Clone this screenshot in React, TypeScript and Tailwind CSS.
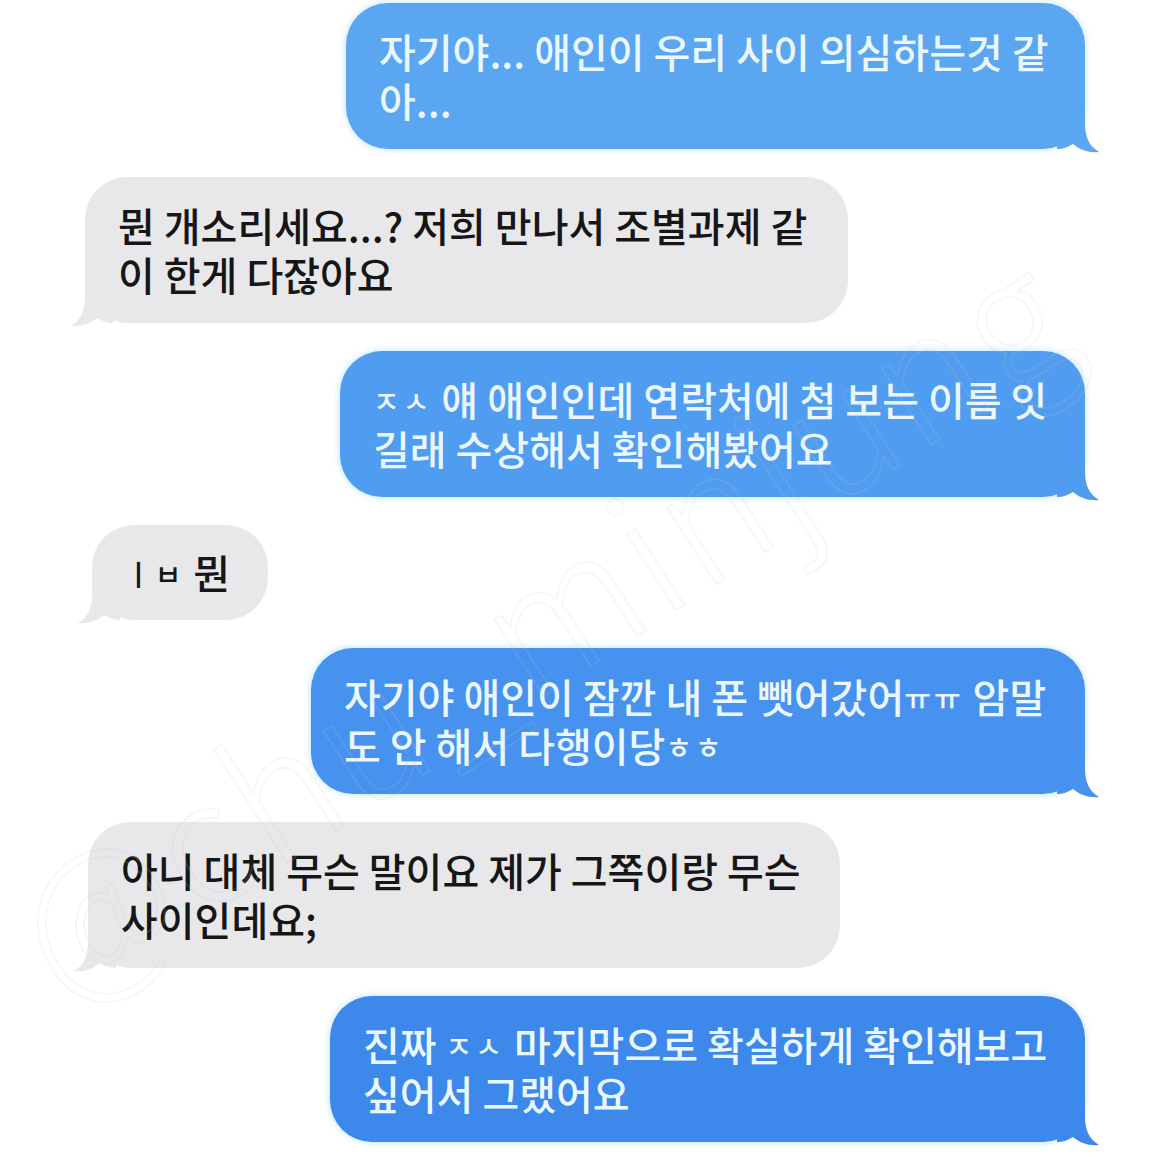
import React from "react";

type Side = "left" | "right";

function Tail({ side, color }: { side: Side; color: string }) {
  if (side === "right") {
    return (
      <svg
        className={`absolute -right-[14px] -bottom-[4px] w-[42px] h-[46px] ${color}`}
        viewBox="0 0 42 46"
        fill="currentColor"
      >
        <path d="M0 0 H28 V16 C28 30 32 39 42 45 C32 46 23 43 16 37 C11 40 6 42 0 42 Z" />
      </svg>
    );
  }
  return (
    <svg
      className={`absolute -left-[14px] -bottom-[4px] w-[42px] h-[46px] ${color}`}
      viewBox="0 0 42 46"
      fill="currentColor"
    >
      <path d="M42 0 H14 V16 C14 30 10 39 0 45 C10 46 19 43 26 37 C31 40 36 42 42 42 Z" />
    </svg>
  );
}

function Blue({
  w,
  bg,
  text,
  children,
}: {
  w: string;
  bg: string;
  text: string;
  children: React.ReactNode;
}) {
  return (
    <div className="flex justify-end pr-[85px]">
      <div
        className={`relative ${w} ${bg} rounded-[42px] pl-[33px] pr-[16px] py-[24px] shadow-[0_0_7px_rgba(150,215,255,0.7)]`}
      >
        <div className="relative z-10 whitespace-nowrap text-[40px] leading-[49px] font-medium text-[#eaf7ff]">
          {children}
        </div>
        <Tail side="right" color={text} />
      </div>
    </div>
  );
}

function Gray({
  w,
  ml,
  children,
  py = "py-[24px]",
}: {
  w: string;
  ml: string;
  children: React.ReactNode;
  py?: string;
}) {
  return (
    <div className={`flex justify-start ${ml}`}>
      <div className={`relative ${w} bg-[#e8e8ea] rounded-[42px] pl-[33px] pr-[16px] ${py}`}>
        <div className="relative z-10 whitespace-nowrap text-[40px] leading-[49px] font-medium text-[#161616]">
          {children}
        </div>
        <Tail side="left" color="text-[#e8e8ea]" />
      </div>
    </div>
  );
}

function J({ children }: { children: React.ReactNode }) {
  return (
    <span className="inline-block align-middle text-[29px] leading-none tracking-[3px] -translate-y-[5px]">
      {children}
    </span>
  );
}

export default function App() {
  return (
    <div
      className="relative w-[1170px] h-[1157px] bg-white overflow-hidden"
      style={{ fontFamily: '"Noto Sans CJK KR", "Noto Sans", sans-serif' }}
    >
      <div className="flex flex-col gap-[28px] pt-[3px]">
        <Blue w="w-[739px]" bg="bg-[#5ba6f1]" text="text-[#5ba6f1]">
          자기야... 애인이 우리 사이 의심하는것 같
          <br />
          아...
        </Blue>
        <Gray w="w-[763px]" ml="pl-[85px]">
          뭔 개소리세요...? 저희 만나서 조별과제 같
          <br />이 한게 다잖아요
        </Gray>
        <Blue w="w-[745px]" bg="bg-[#509cf0]" text="text-[#509cf0]">
          <J>ㅈㅅ</J> 얘 애인인데 연락처에 첨 보는 이름 잇
          <br />
          길래 수상해서 확인해봤어요
        </Blue>
        <Gray w="w-[176px]" ml="pl-[92px]" py="py-[23px]">
          <J>ㅣㅂ</J> 뭔
        </Gray>
        <Blue w="w-[774px]" bg="bg-[#4692ee]" text="text-[#4692ee]">
          자기야 애인이 잠깐 내 폰 뺏어갔어<J>ㅠㅠ</J> 암말
          <br />도 안 해서 다행이당<J>ㅎㅎ</J>
        </Blue>
        <Gray w="w-[752px]" ml="pl-[88px]">
          아니 대체 무슨 말이요 제가 그쪽이랑 무슨
          <br />
          사이인데요;
        </Gray>
        <Blue w="w-[755px]" bg="bg-[#3c88eb]" text="text-[#3c88eb]">
          진짜 <J>ㅈㅅ</J> 마지막으로 확실하게 확인해보고
          <br />
          싶어서 그랬어요
        </Blue>
      </div>

      <div className="pointer-events-none absolute left-[25px] top-[860px] z-20 origin-left -rotate-[33deg] whitespace-nowrap text-[170px] leading-none font-light text-transparent [-webkit-text-stroke:1.5px_rgba(200,200,200,0.18)] tracking-[4px]">
        @chu_minjung
      </div>
    </div>
  );
}
